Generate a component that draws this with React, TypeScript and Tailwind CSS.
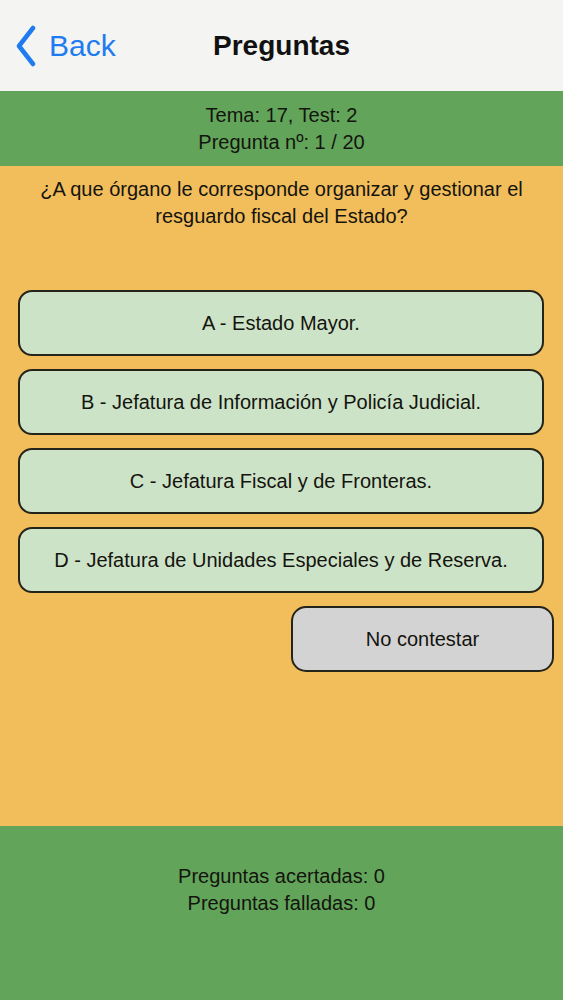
import React from "react";

const answers = [
  "A - Estado Mayor.",
  "B - Jefatura de Información y Policía Judicial.",
  "C - Jefatura Fiscal y de Fronteras.",
  "D - Jefatura de Unidades Especiales y de Reserva.",
];

export default function App() {
  return (
    <div
      className="w-[563px] h-[1000px] flex flex-col text-[#14140e]"
      style={{ fontFamily: '"Liberation Sans", Arial, sans-serif' }}
    >
      <header className="h-[91px] shrink-0 bg-[#f4f4f2] flex items-center relative">
        <div className="flex items-center pl-[15px] text-[#1f7cf0]">
          <svg width="21" height="42" viewBox="0 0 21 42" className="mt-[1px]">
            <path d="M18 3 L4 21 L18 39" fill="none" stroke="#1f7cf0" strokeWidth="4.5" strokeLinecap="round" strokeLinejoin="round" />
          </svg>
          <span className="ml-[13px] text-[30px] leading-none">Back</span>
        </div>
        <div className="absolute inset-0 flex items-center justify-center pointer-events-none">
          <span className="text-[28px] font-bold leading-none text-[#111]">Preguntas</span>
        </div>
      </header>
      <section className="h-[75px] shrink-0 bg-[#62a55a] flex flex-col items-center justify-center text-[20px] leading-[27px]">
        <div>Tema: 17, Test: 2</div>
        <div>Pregunta nº: 1 / 20</div>
      </section>
      <main className="flex-1 bg-[#f2bd5b] flex flex-col">
        <p className="text-center text-[20px] leading-[27px] px-[30px] pt-[10px]">
          ¿A que órgano le corresponde organizar y gestionar el resguardo fiscal del Estado?
        </p>
        <div className="flex flex-col gap-[13px] mt-[60px] pl-[18px] pr-[19px]">
          {answers.map((a) => (
            <div
              key={a}
              className="h-[66px] rounded-[14px] border-2 border-[#24241a] bg-[#cde3c8] flex items-center justify-center text-[20px]"
            >
              {a}
            </div>
          ))}
        </div>
        <div className="flex justify-end pr-[9px] mt-[13px]">
          <div className="w-[263px] h-[66px] rounded-[15px] border-2 border-[#24241a] bg-[#d3d3d3] flex items-center justify-center text-[20px]">
            No contestar
          </div>
        </div>
      </main>
      <footer className="h-[174px] shrink-0 bg-[#62a55a] flex flex-col items-center pt-[37px] text-[20px] leading-[27px]">
        <div>Preguntas acertadas: 0</div>
        <div>Preguntas falladas: 0</div>
      </footer>
    </div>
  );
}
